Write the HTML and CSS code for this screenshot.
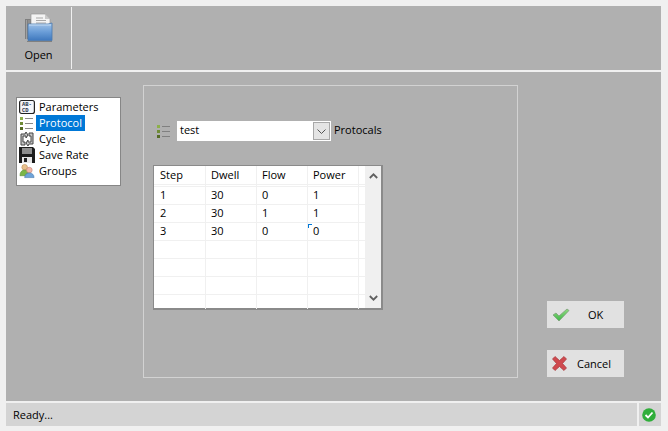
FILE: index.html
```html
<!DOCTYPE html>
<html lang="en">
<head>
<meta charset="utf-8">
<title>Protocol</title>
<link rel="stylesheet" href="styles.css">
</head>
<body>
<div class="window">
  <header class="toolbar">
    <button class="tool">
      <svg class="tool-icon" width="30" height="30" viewBox="0 0 30 30">
        <defs>
          <linearGradient id="fold" x1="0" y1="0" x2="0" y2="1"><stop offset="0" stop-color="#a3c4e8"/><stop offset="0.5" stop-color="#6b9ed8"/><stop offset="1" stop-color="#3f78bd"/></linearGradient>
          <linearGradient id="ok" x1="0" y1="0" x2="0" y2="1"><stop offset="0" stop-color="#8fdc80"/><stop offset="1" stop-color="#3fb548"/></linearGradient>
        </defs>
        <path d="M1 6h6v20H1z" fill="#7f7f7f"/>
        <path d="M2 7h1v19H2zM4.500 7h1v19h-1z" fill="#a0a0a0"/>
        <path d="M7 1h14l5 5v8H7z" fill="#f4f4f4" stroke="#9a9a9a" stroke-width="0.700"/>
        <path d="M21 1v5h5z" fill="#c9c9c9"/>
        <path d="M12 5h7M12 7.500h10M12 10h10" stroke="#a8a8a8" stroke-width="1"/>
        <path d="M4 11h20l4-1v17.500H4z" fill="url(#fold)" stroke="#4a79ae" stroke-width="0.800"/>
        <path d="M5 12h22" stroke="#c4dcf3" stroke-width="1"/>
        <path d="M3 28.500h25" stroke="#808080" stroke-width="1"/>
      </svg>
      <span>Open</span>
    </button>
  </header>
  <main class="content">
    <ul class="tree">
      <li class="tree-row">
        <svg class="tree-icon" width="16" height="16" viewBox="0 0 16 16"><rect x="0.600" y="1.500" width="14.800" height="13" rx="2" fill="#f4f6fa" stroke="#222" stroke-width="1.200"/><text class="glyph" x="3" y="7.300">AB-</text><text class="glyph" x="3" y="12.800">CD</text></svg>
        <span class="tree-label">Parameters</span>
      </li>
      <li class="tree-row">
        <svg class="tree-icon" width="16" height="16" viewBox="0 0 16 16"><path d="M1 2h3v3H1z" fill="#8db04a"/><path d="M1 7h3v3H1z" fill="#6f8c36"/><path d="M1 12h3v3H1z" fill="#556b26"/><path d="M6 3.500h8M6 8.500h8M6 13.500h8" stroke="#8a8a8a" stroke-width="1"/></svg>
        <span class="tree-label selected">Protocol</span>
      </li>
      <li class="tree-row">
        <svg class="tree-icon" width="16" height="16" viewBox="0 0 16 16"><path d="M2 3h4l1-2 2 3-2 3V5H4v6h2v3H2zM14 13h-4l-1 2-2-3 2-3v2h3V5h-2V2h4z" fill="#c4c4c4" stroke="#444" stroke-width="1"/></svg>
        <span class="tree-label">Cycle</span>
      </li>
      <li class="tree-row">
        <svg class="tree-icon" width="16" height="16" viewBox="0 0 16 16"><path d="M0 0h14l2 2v14H0z" fill="#1c1c1c"/><rect x="3" y="1" width="10" height="6" fill="#8d8d8d"/><rect x="3" y="10" width="10" height="6" fill="#e6e6e6"/><rect x="5" y="11" width="3" height="4" fill="#222"/></svg>
        <span class="tree-label">Save Rate</span>
      </li>
      <li class="tree-row">
        <svg class="tree-icon" width="16" height="16" viewBox="0 0 17 16"><circle cx="6" cy="4" r="3" fill="#e9c08d" stroke="#b88b4e" stroke-width="0.600"/><path d="M1 13c0-4 2-6 5-6s4 2 4 6z" fill="#7ab648" stroke="#55892e" stroke-width="0.600"/><circle cx="11" cy="7" r="3" fill="#f1b7a8" stroke="#c57f6e" stroke-width="0.600"/><path d="M6 15c0-3 2-5 5-5s5 2 5 5z" fill="#6ea3d8" stroke="#3e72aa" stroke-width="0.600"/></svg>
        <span class="tree-label">Groups</span>
      </li>
    </ul>
    <section class="panel">
      <div class="combo-row">
        <svg class="combo-icon" width="14" height="14" viewBox="0 0 14 14"><path d="M0 0h3v3H0z" fill="#8db04a"/><path d="M0 5h3v3H0z" fill="#6f8c36"/><path d="M0 10h3v3H0z" fill="#556b26"/><path d="M5 1.500h8M5 6.500h8M5 11.500h8" stroke="#808080" stroke-width="1"/></svg>
        <div class="combo">
          <span class="combo-value">test</span>
          <span class="combo-btn"><svg width="9" height="5" viewBox="0 0 9 5"><path d="M0.500 0.500l4 4 4-4" fill="none" stroke="#555" stroke-width="1"/></svg></span>
        </div>
        <span class="combo-label">Protocals</span>
      </div>
      <div class="grid">
        <table class="grid-table">
          <colgroup><col class="c1"><col class="c2"><col class="c2"><col class="c2"><col class="c5"></colgroup>
          <thead>
            <tr><th>Step</th><th>Dwell</th><th>Flow</th><th>Power</th><th></th></tr>
          </thead>
          <tbody>
            <tr><td>1</td><td>30</td><td>0</td><td>1</td><td></td></tr>
            <tr><td>2</td><td>30</td><td>1</td><td>1</td><td></td></tr>
            <tr><td>3</td><td>30</td><td>0</td><td class="marked">0</td><td></td></tr>
            <tr><td></td><td></td><td></td><td></td><td></td></tr>
            <tr><td></td><td></td><td></td><td></td><td></td></tr>
            <tr><td></td><td></td><td></td><td></td><td></td></tr>
            <tr class="last"><td></td><td></td><td></td><td></td><td></td></tr>
          </tbody>
        </table>
        <div class="scrollbar">
          <svg width="9" height="6" viewBox="0 0 9 6"><path d="M0.800 5l3.700-3.700L8.200 5" fill="none" stroke="#606060" stroke-width="1.800"/></svg>
          <svg width="9" height="6" viewBox="0 0 9 6"><path d="M0.800 1l3.700 3.700L8.200 1" fill="none" stroke="#606060" stroke-width="1.800"/></svg>
        </div>
      </div>
    </section>
    <aside class="actions">
      <button class="action">
        <svg width="18" height="14" viewBox="0 0 18 14"><path d="M1 7l3-2 3 3 8-7 2 1.500L7 13z" fill="url(#ok)" stroke="#7d9f7a" stroke-width="0.800"/></svg>
        <span class="action-label ok">OK</span>
      </button>
      <button class="action">
        <svg width="15" height="15" viewBox="0 0 15 15"><path d="M3 0.500l4.500 4 4.500-4 2.500 2.500-4 4.500 4 4.500-2.500 2.500-4.500-4-4.500 4L0.500 12l4-4.500-4-4.500z" fill="#cf4a4f" stroke="#a83a3e" stroke-width="0.700"/></svg>
        <span class="action-label">Cancel</span>
      </button>
    </aside>
  </main>
  <footer class="status">
    <span class="status-text">Ready...</span>
    <span class="status-icon">
      <svg width="14" height="14" viewBox="0 0 14 14"><circle cx="7" cy="7" r="6.800" fill="#2fae3a"/><path d="M3.500 7l2.500 2.500 4.500-5" fill="none" stroke="#fff" stroke-width="1.800"/></svg>
    </span>
  </footer>
</div>
</body>
</html>
```
FILE: styles.css
```css
* { box-sizing: border-box; }
html, body { margin: 0; height: 100%; }
body {
  background: #f0f0f0;
  font-family: "Open Sans", "Noto Sans", sans-serif;
  font-size: 11px;
  color: #000;
  overflow: hidden;
}
button { font: inherit; color: inherit; border: 0; padding: 0; background: none; }
ul { list-style: none; margin: 0; padding: 0; }

.window {
  width: 655px;
  height: 420px;
  margin: 6px 0 0 6px;
  display: flex;
  flex-direction: column;
  background: #b0b0b0;
}

.toolbar {
  height: 66px;
  flex: none;
  border-bottom: 2px solid #f0f0f0;
  display: flex;
  padding-top: 1px;
  padding-bottom: 1px;
}
.tool {
  width: 66px;
  border-right: 1px solid #f0f0f0;
  display: flex;
  flex-direction: column;
  align-items: center;
  padding-top: 6px;
  line-height: 16px;
  gap: 4px;
  height: 62px;
}
.tool-icon { display: block; }

.content {
  flex: 1;
  display: flex;
  align-items: flex-start;
  border-bottom: 2px solid #f0f0f0;
  min-height: 0;
}

.tree {
  margin: 25px 0 0 10px;
  width: 105px;
  height: 89px;
  flex: none;
  background: #fff;
  border: 1px solid #868686;
  padding-top: 1px;
}
.tree-row {
  height: 16px;
  display: flex;
  align-items: center;
  padding-left: 2px;
  line-height: 16px;
}
.tree-icon { flex: none; margin-right: 1px; }
.glyph {
  font-family: "Liberation Mono", monospace;
  font-size: 5.500px;
  font-weight: 700;
  fill: #26324a;
}
.tree-label { padding: 0 3px; }
.tree-label.selected { background: #0078d7; color: #fff; width: 49px; }

.panel {
  margin: 13px 0 0 22px;
  width: 375px;
  height: 293px;
  flex: none;
  border: 1px solid #d2d2d2;
  padding: 35px 9px 0;
}

.combo-row {
  display: flex;
  align-items: center;
  height: 20px;
}
.combo-icon { flex: none; margin: 1px 6px 0 4px; }
.combo {
  width: 154px;
  height: 20px;
  background: #fff;
  display: flex;
  align-items: center;
  justify-content: space-between;
  padding: 1px;
  line-height: 16px;
}
.combo-value { padding-left: 2px; margin-top: -2px; }
.combo-btn {
  width: 17px;
  height: 18px;
  background: #e4e4e4;
  border: 1px solid #a8a8a8;
  display: flex;
  align-items: center;
  justify-content: center;
}
.combo-label { margin: -3px 0 0 3px; }

.grid {
  margin-top: 24px;
  width: 230px;
  height: 145px;
  display: flex;
  justify-content: space-between;
  background: #fff;
  border: 1px solid #8a8a8a;
  border-width: 1px 2px 2px 1px;
}
.grid-table {
  width: 211px;
  height: 142px;
  table-layout: fixed;
  border-collapse: separate;
  border-spacing: 0;
}
.c1 { width: 52px; }
.c2 { width: 51px; }
.c5 { width: 6px; }
.grid-table th, .grid-table td {
  padding: 0 0 1px 5px;
  font-weight: 400;
  text-align: left;
  line-height: 16px;
  border-right: 1px solid #f0f0f0;
  border-bottom: 1px solid #f0f0f0;
  height: 18px;
}
.grid-table th:first-child, .grid-table td:first-child { padding-left: 6px; }
.grid-table th { height: 21px; border-bottom: 3px double #f0f0f0; }
.grid-table th:last-child, .grid-table td:last-child { border-right: 0; padding: 0; }
.grid-table .last td { border-bottom: 0; height: 14px; }
.marked { position: relative; }
.marked::before {
  content: "";
  position: absolute;
  left: 0;
  top: 1px;
  width: 3px;
  height: 3px;
  border-left: 1px solid #0078d7;
  border-top: 1px solid #0078d7;
}

.scrollbar {
  width: 16px;
  background: #f0f0f0;
  display: flex;
  flex-direction: column;
  justify-content: space-between;
  align-items: center;
  padding: 7px 0;
}
.scrollbar svg { display: block; }

.actions {
  margin: 229px 0 0 29px;
  display: flex;
  flex-direction: column;
  gap: 22px;
}
.action {
  width: 77px;
  height: 27px;
  background: #e1e1e1;
  display: flex;
  align-items: center;
  padding-left: 5px;
  line-height: 16px;
}
.action-label { margin-left: 10px; }
.action-label.ok { margin-left: 18px; }

.status {
  height: 23px;
  flex: none;
  background: #d4d4d4;
  display: flex;
  align-items: center;
  justify-content: space-between;
}
.status-text { padding-left: 7px; }
.status-icon {
  width: 24px;
  height: 100%;
  border-left: 2px solid #f0f0f0;
  display: flex;
  align-items: center;
  justify-content: center;
  padding-right: 2px;
}
```
